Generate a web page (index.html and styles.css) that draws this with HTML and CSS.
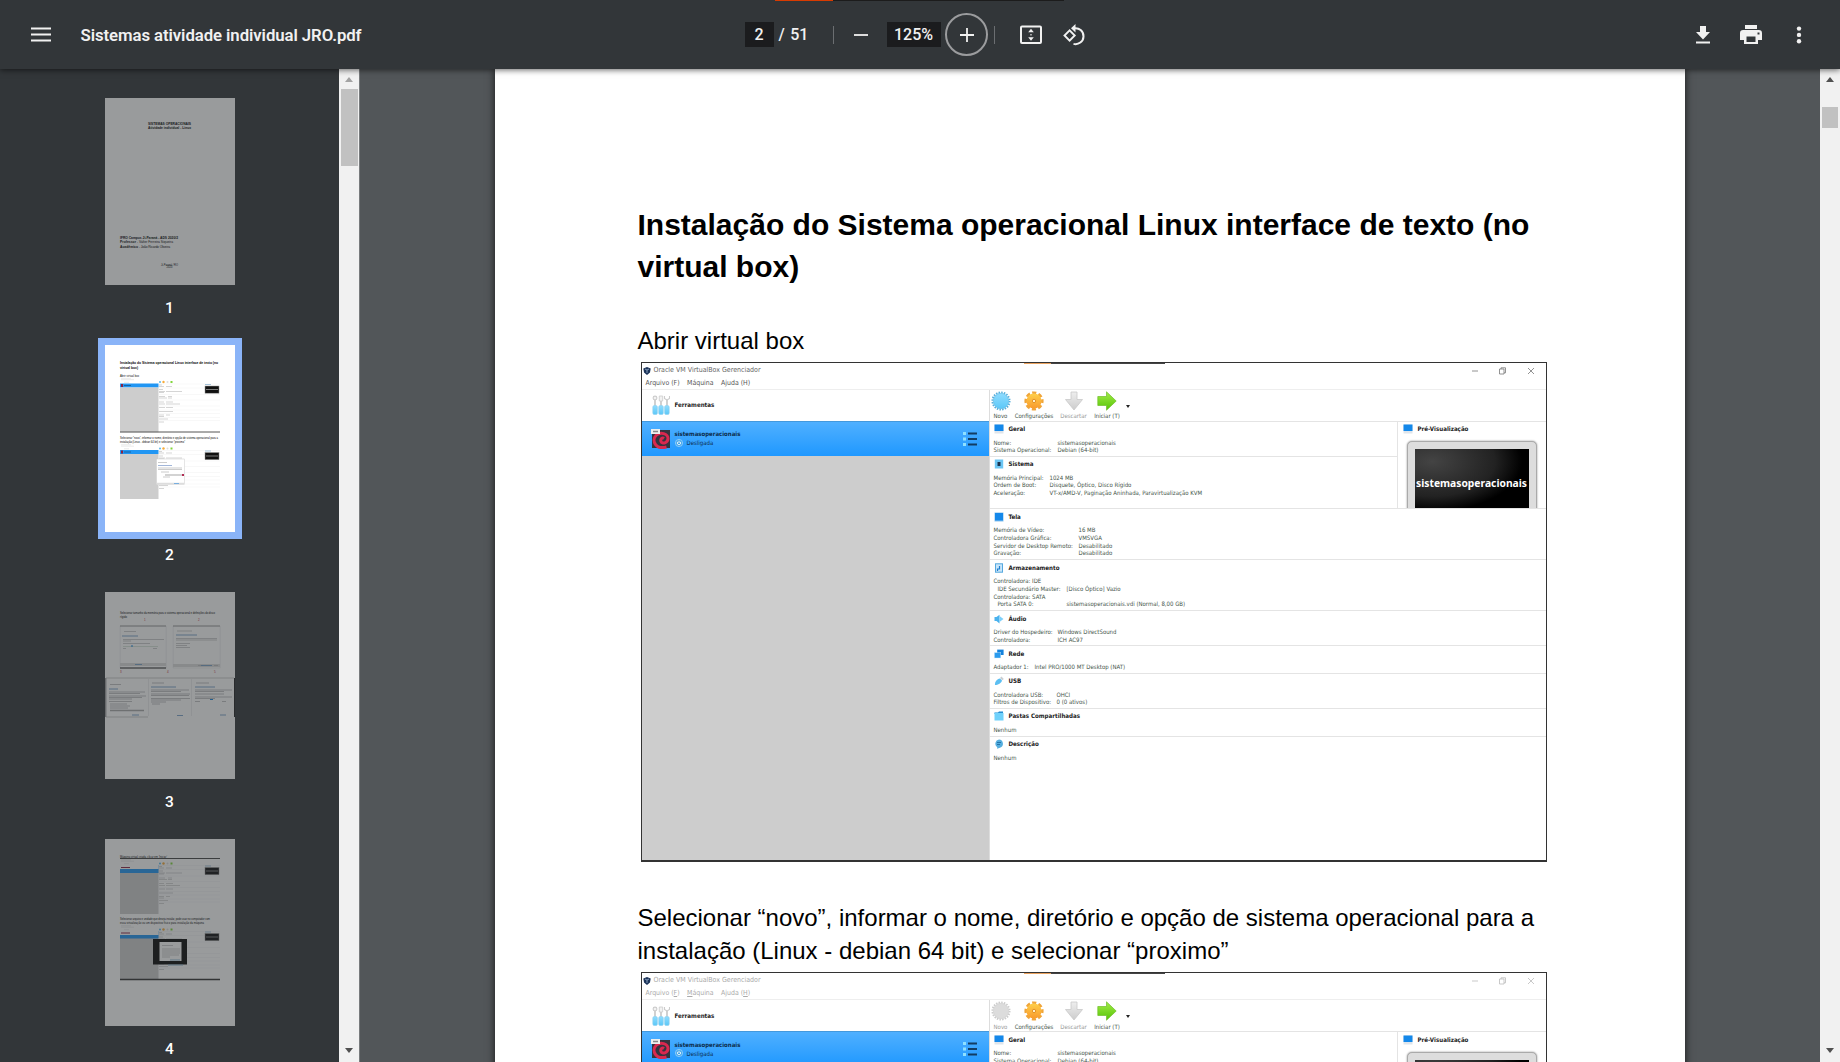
FILE: index.html
```html
<!DOCTYPE html>
<html lang="pt-BR">
<head>
<meta charset="utf-8">
<title>Sistemas atividade individual JRO.pdf</title>
<link rel="stylesheet" href="styles.css">
</head>
<body>
<svg class="defs" width="0" height="0" aria-hidden="true">
  <defs>
    <linearGradient id="gBlue" x1="0" y1="0" x2="0" y2="1"><stop offset="0" stop-color="#8fdcff"/><stop offset="1" stop-color="#5cc8f8"/></linearGradient>
    <linearGradient id="gOrange" x1="0" y1="0" x2="0" y2="1"><stop offset="0" stop-color="#ffd04a"/><stop offset="1" stop-color="#f99a2c"/></linearGradient>
    <linearGradient id="gGreen" x1="0" y1="0" x2="0" y2="1"><stop offset="0" stop-color="#a2ec48"/><stop offset="1" stop-color="#56c405"/></linearGradient>
    <linearGradient id="gGray" x1="0" y1="0" x2="0" y2="1"><stop offset="0" stop-color="#eee"/><stop offset="1" stop-color="#ccc"/></linearGradient>
    <symbol id="i-logo" viewBox="0 0 8 8"><path d="M.3 1.400 4 0l3.700 1.400-.7 4L4 8 1 5.400z" fill="#1b3358"/><path d="M2 2l2 1 2-1M4 3v3" stroke="#9fb6d4" stroke-width=".8" fill="none"/></symbol>
    <symbol id="i-tools" viewBox="0 0 18 20"><g stroke="#ccc" stroke-width="1.100" fill="#f2f2f2"><path d="M3 5v6M9 2v9M15 5v6" stroke-width="1.800"/><circle cx="3" cy="3" r="1.900"/><path d="M7.300 1h3.400v5H7.300z" stroke-width=".8"/><path d="M12.500 1v2.500L15 5l2.500-1.500V1" fill="none"/></g><g fill="url(#gBlue)" stroke="#8fd0ee" stroke-width=".6"><rect x=".8" y="10.500" width="4.600" height="9" rx="1.500"/><rect x="6.700" y="10.500" width="4.600" height="9" rx="1.500"/><rect x="12.600" y="10.500" width="4.600" height="9" rx="1.500"/></g></symbol>
    <symbol id="i-star" viewBox="0 0 20 20"><circle cx="10" cy="10" r="8.600" fill="none" stroke="#58aeda" stroke-width="1.900" stroke-dasharray="1.500 1.200"/><circle cx="10" cy="10" r="7.700" fill="url(#gBlue)" stroke="#5bb5e0" stroke-width=".6"/></symbol>
    <symbol id="i-star-off" viewBox="0 0 20 20"><circle cx="10" cy="10" r="8.600" fill="none" stroke="#ccc" stroke-width="1.900" stroke-dasharray="1.500 1.200"/><circle cx="10" cy="10" r="7.700" fill="#dcdcdc" stroke="#ccc" stroke-width=".6"/></symbol>
    <symbol id="i-gear" viewBox="0 0 20 20"><circle cx="10" cy="10" r="8" fill="none" stroke="#f0a53a" stroke-width="3.200" stroke-dasharray="4 2.283" stroke-dashoffset="2"/><circle cx="10" cy="10" r="7.600" fill="url(#gOrange)"/><circle cx="10" cy="10" r="1.700" fill="#fff0c8" stroke="#e08a1c" stroke-width=".9"/></symbol>
    <symbol id="i-down" viewBox="0 0 20 20"><path d="M7 1h6v7.500h5.500L10 19 1.500 8.500H7z" fill="url(#gGray)" stroke="#c9c9c9" stroke-width=".8"/></symbol>
    <symbol id="i-go" viewBox="0 0 20 20"><path d="M.8 5.500h8.700V.8l9.700 9.200-9.700 9.200v-4.700H.8z" fill="url(#gGreen)" stroke="#6fbf28" stroke-width=".7"/></symbol>
    <symbol id="i-debian" viewBox="0 0 20 20"><rect x="1" y="1" width="18" height="18" fill="#34343e"/><path d="M15.500 18C4 21 .5 11 5 6.500S17 5 17 9.500s-6 6-7 3 1.500-4 3-3" fill="none" stroke="#d9284f" stroke-width="3"/><rect x="0" y="0" width="9" height="5" fill="#eee"/><path d="M2 2.500h5" stroke="#888" stroke-width="1.500"/></symbol>
    <symbol id="i-power" viewBox="0 0 8 8"><circle cx="4" cy="4" r="3.600" fill="#43a5e8" stroke="#b9e2ff" stroke-width=".6"/><path d="M2.800 2.800a1.700 1.700 0 1 0 2.400 0M4 1.700V4" fill="none" stroke="#fff" stroke-width=".8"/></symbol>
    <symbol id="i-menu" viewBox="0 0 14 14"><g fill="#8fe0ff"><rect width="3" height="3"/><rect y="5.500" width="3" height="3"/><rect y="11" width="3" height="3"/></g><g fill="#123c63"><rect x="5" y=".5" width="9" height="2"/><rect x="5" y="6" width="9" height="2"/><rect x="5" y="11.500" width="9" height="2"/></g></symbol>
    <symbol id="i-screen" viewBox="0 0 10 10"><rect x=".5" y=".5" width="9" height="9" fill="#dfe5eb"/><rect x=".5" y=".5" width="9" height="6.500" fill="#1488ea"/></symbol>
    <symbol id="i-display" viewBox="0 0 10 10"><rect x=".5" y=".5" width="9" height="9" fill="#8cc4ee"/><rect x="1" y="1" width="8" height="7.500" fill="#1488ea"/></symbol>
    <symbol id="i-chip" viewBox="0 0 10 10"><rect x=".8" y=".5" width="8.400" height="9" fill="#6cc6f4"/><rect x="3.500" y="3" width="3" height="4" fill="#1b3550"/></symbol>
    <symbol id="i-disk" viewBox="0 0 10 10"><rect x="1.500" y=".8" width="7" height="8.400" fill="#c9e6fa" stroke="#56a8de"/><path d="M3.500 8V6h2V3" fill="none" stroke="#1d7fd0" stroke-width="1.200"/></symbol>
    <symbol id="i-audio" viewBox="0 0 10 10"><path d="M.5 3h2L5.500.8v8.600l-3-2.400h-2z" fill="#4ab2ee"/><path d="M5.500 2 9.500 5 5.500 8z" fill="#7fd0fa"/></symbol>
    <symbol id="i-net" viewBox="0 0 10 10"><rect x="3.200" y=".6" width="6.400" height="5.400" fill="#1482dc"/><rect x=".4" y="3.600" width="6.400" height="5.400" fill="#2b9bed" stroke="#cfe8fb" stroke-width=".4"/></symbol>
    <symbol id="i-usb" viewBox="0 0 10 10"><path d="M1 9C.5 6 3 3 6 2.500l2 2C7.500 7 4 9 1 9z" fill="#5cbff2"/><path d="m6 2 1.500-1.500L9.800 3 8.300 4.300z" fill="#c9ced2"/></symbol>
    <symbol id="i-folder" viewBox="0 0 10 10"><path d="M.5 1.500H4l1-1h4V3H.5z" fill="#1d86cf"/><rect x=".5" y="1.900" width="9" height="7.600" fill="#6fd1fb"/></symbol>
    <symbol id="i-note" viewBox="0 0 10 10"><path d="M5 .5a4.200 4.200 0 0 1 1 8.200L3 9.800l.3-1.600A4.200 4.200 0 0 1 5 .5z" fill="#55aede"/><path d="M3 3.500h4M3 5.500h3" stroke="#1b66a0" stroke-width=".8"/></symbol>
    <!-- miniature of the manager window used on page thumbnails -->
    <symbol id="mini" viewBox="0 0 100 55">
      <path d="M1 .8h10M1 2.200h13M4 4.800h5" stroke="#ccc" stroke-width=".4"/>
      <rect y="6" width="38.500" height="4" fill="#2196f3"/><rect y="10" width="38.500" height="45" fill="#cdcdcd"/>
      <rect x="1" y="6.500" width="2" height="3" fill="#8c2344"/><path d="M4 8h7" stroke="#174d7c" stroke-width=".7"/>
      <circle cx="40" cy="4.500" r="1" fill="#5ab9ec"/><circle cx="43.500" cy="4.500" r="1.200" fill="#f7ab39"/><circle cx="47.500" cy="4.500" r="1" fill="#ddd"/><path d="M50.500 3.500h2v2h-2z" fill="#80d63a"/>
      <path d="M39 6.500h61M39 10.500h46M39 17h61M39 22.500h61M39 28.500h61M39 32.500h61M39 36h61M39 40h61M39 43h61" stroke="#eee" stroke-width=".4"/>
      <g stroke="#aaa" stroke-width=".5"><path d="M39 7.500h3M39 9h5M46 9h6M39 12h4M39 14h6M46 14h16M39 15h5M39 19h6M48 19h4M39 20.500h8M48 20.500h4M39 24.500h5M46 24.500h7M39 26.500h6M46 26.500h14M39 30h6M46 30h7M39 34h14M39 37.500h5M46 37.500h4M39 39h5M39 41.500h9M39 44.500h5"/></g>
      <rect x="85" y="8.500" width="14" height="7.200" fill="#101010" stroke="#999" stroke-width=".5"/><path d="M86 12h12" stroke="#aaa" stroke-width=".7"/><path d="M85 7h6" stroke="#6a9bc0" stroke-width=".6"/>
    </symbol>
  </defs>
</svg>

<div class="viewer">
  <header class="toolbar">
    <div class="title-area">
      <svg class="burger" viewBox="0 0 20 16"><path d="M0 1.500h20M0 7.500h20M0 13.500h20" stroke="#f1f1f1" stroke-width="2.200"/></svg>
      <h1 class="file-name">Sistemas atividade individual JRO.pdf</h1>
    </div>
    <div class="controls">
      <span class="field page-field">2</span><span class="page-total">/ 51</span>
      <i class="sep sep-a"></i>
      <svg class="minus" viewBox="0 0 14 14"><path d="M0 7h14" stroke="#ddd" stroke-width="2"/></svg>
      <span class="field zoom-field">125%</span>
      <span class="plus-ring"><svg viewBox="0 0 14 14"><path d="M0 7h14M7 0v14" stroke="#f1f1f1" stroke-width="1.800"/></svg></span>
      <i class="sep"></i>
      <svg class="fit" viewBox="0 0 22 20"><rect x="1" y="1.500" width="20" height="16.500" rx="1" fill="none" stroke="#f1f1f1" stroke-width="2"/><path d="m11 3.800 2.800 3.400H8.200zM11 15.700l2.800-3.400H8.200zM10.400 9h1.200v1.500h-1.200z" fill="#f1f1f1"/></svg>
      <svg class="rotate" viewBox="0 0 22 22"><path d="M6.600 6.400 1.500 11.500l5.100 5.100 5.100-5.100z" fill="none" stroke="#f1f1f1" stroke-width="1.900"/><path d="M11 4.300a8 8 0 1 1-.5 15.600" fill="none" stroke="#f1f1f1" stroke-width="2"/><path d="M12.500 0v8.400L8 4.300z" fill="#f1f1f1"/></svg>
    </div>
    <div class="actions">
      <svg width="16" height="20" viewBox="0 0 16 20"><path d="M5 1h6v6h4l-7 7.500L1 7h4zM1 16.500h14v2H1z" fill="#f1f1f1"/></svg>
      <svg width="22" height="20" viewBox="0 0 22 20"><path d="M5 0h12v4H5zM3.500 5h15A3.300 3.300 0 0 1 22 8.300V15h-4v4H4v-4H0V8.300A3.300 3.300 0 0 1 3.500 5zM6.500 11.500V17h9v-5.500zM17.500 7.500v2h2v-2z" fill="#f1f1f1" fill-rule="evenodd"/></svg>
      <svg width="6" height="18" viewBox="0 0 6 18"><g fill="#f1f1f1"><circle cx="3" cy="2.600" r="2.200"/><circle cx="3" cy="8.900" r="2.200"/><circle cx="3" cy="15.200" r="2.200"/></g></svg>
    </div>
    <i class="top-strip"></i>
  </header>

  <div class="body">
    <aside class="thumbs">
      <figure class="thumb">
        <svg class="paper" viewBox="0 0 130 187">
          <rect width="130" height="187" fill="#fff"/>
          <g font-size="3.300"><g font-weight="bold"><text x="43" y="26.800" textLength="43">SISTEMAS OPERACIONAIS</text><text x="43" y="30.800" textLength="43">Atividade individual - Linux</text><text x="15" y="141" textLength="58">IFRO Campus Ji-Paraná - ADS 2020/2</text><text x="15" y="145" textLength="16">Professor</text><text x="15" y="150" textLength="18">Acadêmico</text></g>
          <text x="32" y="145" textLength="36">- Valter Ferreira Siqueira</text><text x="34" y="150" textLength="31">- João Ricardo Oliveira</text></g>
          <g font-size="2.600"><text x="56" y="167.500" textLength="17">Ji-Paraná / RO</text><text x="61.500" y="170.300" textLength="6">2020</text></g>
        </svg>
        <figcaption>1</figcaption>
      </figure>
      <figure class="thumb selected">
        <svg class="paper" viewBox="0 0 130 187">
          <rect width="130" height="187" fill="#fff"/>
          <g font-size="3.300" font-weight="bold"><text x="15" y="19" textLength="98">Instalação do Sistema operacional Linux interface de texto (no</text><text x="15" y="24" textLength="18">virtual box)</text></g>
          <g font-size="2.600"><text x="15" y="31.800" textLength="19">Abrir virtual box</text><text x="15" y="93.500" textLength="98">Selecionar “novo”, informar o nome, diretório e opção de sistema operacional para a</text><text x="15" y="97.500" textLength="65">instalação (Linux - debian 64 bit) e selecionar “proximo”</text></g>
          <use href="#mini" x="15" y="32.500" width="100" height="55"/><path d="M15 87h100" stroke="#555"/>
          <use href="#mini" x="15" y="99" width="100" height="55"/>
          <rect x="51.500" y="114" width="28" height="25.500" fill="#fff" stroke="#ccc" stroke-width=".5"/><path d="M53 117.500h9M53 123h24M53 124.500h24M56 127h8M58 132h7" stroke="#aaa" stroke-width=".6"/><path d="M53 120.500h14" stroke="#7a97c9" stroke-width=".7"/><path d="M60 130h17" stroke="#c5c5c5" stroke-width="1.500"/><path d="M77 129h2v2h-2z" fill="#b22b52"/><path d="M52 138.500h27" stroke="#ddd" stroke-width="1.500"/><path d="M69 138.500h5" stroke="#77aedf"/>
        </svg>
        <figcaption>2</figcaption>
      </figure>
      <figure class="thumb">
        <svg class="paper" viewBox="0 0 130 187">
          <rect width="130" height="187" fill="#fff"/>
          <g font-size="2.700"><text x="15" y="21.500" textLength="95">Selecionar tamanho da memória para o sistema operacional e definições do disco</text><text x="15" y="25.500" textLength="7">rígido</text></g>
          <g fill="#c33" font-size="3"><text x="39" y="28.500">1</text><text x="93" y="28.500">2</text><text x="15" y="80.500">3</text><text x="62" y="80.500">4</text><text x="109" y="80.500">5</text></g>
          <g fill="none" stroke="#ddd" stroke-width=".5"><path d="M15.200 34v42h46V34M68.200 34v42h47V34"/></g>
          <path d="M15 34h46M68 34h47" stroke="#777" stroke-width=".8"/><path d="M15 76h46" stroke="#222"/><path d="M15 72.500h46M68 73.500h47" stroke="#ddd" stroke-width="3"/>
          <g stroke="#aaa" stroke-width=".6"><path d="M19 39.500h12M72 39h15M18 47.500h41M18 49h8M18 51.500h27M18 56.500h3M48 56.500h4M71 46.500h41M71 48h41M71 51.500h14M71 53.500h11M71 55.500h14M93 73.500h5M109 73.500h4"/></g>
          <path d="M17 44h16M71 43h21M96 73.500h11M30 72.500h7" stroke="#6f9bc4" stroke-width=".9"/><path d="M18 54.500h35" stroke="#b3ccb5" stroke-width=".5"/><path d="M26 54h2" stroke="#1686e0" stroke-width="1.200"/>
          <path d="M.8 86v39" stroke="#777"/><path d="M129.500 86v39" stroke="#222"/><path d="M1 86h128M1 125h42" stroke="#aaa" stroke-width=".6"/><path d="M43.500 87v37M86.500 87v37" stroke="#ddd" stroke-width=".5"/>
          <g stroke="#999" stroke-width=".6"><path d="M5 92.500h11M47 91h12M91 91h13M4 100h36M4 101.500h31M4 104h37M4 105.500h33M4 107h23M4 109.500h23M5 112h17M5 114h20M5 116h18M46 98h38M46 99.500h30M46 102h39M46 103.500h38M46 106.500h39M46 108h30M46 110h15M47 112h8M90 98h37M90 99.500h29M90 102h29M90 105h37M90 106.500h20M90 109.500h5M117 109.500h4"/></g>
          <path d="M5 118.500h34" stroke="#aaa" stroke-width="1.500"/><path d="M4 97h9M46 95h25M90 95h20M27 123h7M72 123.500h6M115 123h6" stroke="#6f9bc4" stroke-width=".9"/><path d="M105 107.500h3" stroke="#1686e0"/>
        </svg>
        <figcaption>3</figcaption>
      </figure>
      <figure class="thumb">
        <svg class="paper" viewBox="0 0 130 187">
          <rect width="130" height="187" fill="#fff"/>
          <g font-size="2.600"><text x="15" y="18.500" textLength="47">Máquina virtual criada, clicar em ‘Iniciar’</text><text x="15" y="80.500" textLength="90">Selecionar arquivo e unidade que deseja instalar, pode usar no computador com</text><text x="15" y="84.500" textLength="84">essa virtualização ou um dispositivo físico para instalação da máquina</text></g>
          <path d="M15 19.500h100" stroke="#444"/>
          <use href="#mini" x="15" y="20" width="100" height="55"/><rect x="15" y="25.500" width="38.500" height="4.500" fill="#fff"/><path d="M16 28.500h9" stroke="#8c2344"/><rect x="15" y="30" width="38.500" height="4" fill="#2196f3"/>
          <use href="#mini" x="15" y="86" width="100" height="55"/><rect x="15" y="91.500" width="38.500" height="4.500" fill="#fff"/><path d="M16 94h9" stroke="#8c2344"/><rect x="15" y="96" width="38.500" height="3.500" fill="#2196f3"/>
          <path d="M15 140.500h100" stroke="#333" stroke-width="1.500"/>
          <rect x="48" y="100" width="34" height="25.500" fill="#090909"/><rect x="54.500" y="103" width="22" height="19" fill="#fff"/><path d="M57 106.500h11M57 110h18M57 112h18M57 114h18M57 116h17M57 118h8" stroke="#aaa" stroke-width=".6"/><path d="M63 126h15M65 121h10" stroke="#6fa3c4" stroke-width=".8"/>
        </svg>
        <figcaption>4</figcaption>
      </figure>
    </aside>
    <div class="scrollbar muted"><i class="up"></i><i class="grip"></i><i class="down"></i></div>

    <main class="canvas">
      <article class="page">
        <h2 class="doc-title"><span>Instalação do Sistema operacional Linux interface de texto (no</span><br>virtual box)</h2>
        <p class="doc-text first">Abrir virtual box</p>

        <section class="vbox">
          <div class="vb-title"><svg class="logo"><use href="#i-logo"/></svg><span class="vb-name">Oracle VM VirtualBox Gerenciador</span><i class="strip"></i>
            <svg class="winbtns" viewBox="0 0 64 8"><path d="M0 4h6M27.500 2h4.500v5h-4.500zM29 2V.8h4.500v5H32M56 1l6 6M62 1l-6 6" fill="none" stroke="#777" stroke-width=".8"/></svg></div>
          <div class="vb-menu"><span>Arquivo (F)</span><span>Máquina</span><span>Ajuda (H)</span></div>
          <div class="vb-main">
            <div class="vb-left">
              <div class="vb-tools"><svg><use href="#i-tools"/></svg><b>Ferramentas</b></div>
              <div class="vb-machine"><svg class="deb"><use href="#i-debian"/></svg><div class="m-info"><b>sistemasoperacionais</b><span><svg><use href="#i-power"/></svg>Desligada</span></div><svg class="m-menu"><use href="#i-menu"/></svg></div>
            </div>
            <div class="vb-right">
              <div class="vb-bar">
                <div class="tb b1"><svg><use href="#i-star"/></svg><span>Novo</span></div>
                <div class="tb b2"><svg><use href="#i-gear"/></svg><span>Configurações</span></div>
                <div class="tb b3 off"><svg><use href="#i-down"/></svg><span>Descartar</span></div>
                <div class="tb b4"><svg><use href="#i-go"/></svg><span>Iniciar (T)</span></div>
                <i class="caret"></i>
              </div>
              <div class="vb-top">
                <div class="vb-top-left">
                  <div class="sec s-geral"><h3><svg><use href="#i-screen"/></svg>Geral</h3><dl><dt>Nome:</dt><dd>sistemasoperacionais</dd><dt>Sistema Operacional:</dt><dd>Debian (64-bit)</dd></dl></div>
                  <div class="sec s-sistema"><h3><svg><use href="#i-chip"/></svg>Sistema</h3><dl><dt>Memória Principal:</dt><dd>1024 MB</dd><dt>Ordem de Boot:</dt><dd>Disquete, Óptico, Disco Rígido</dd><dt>Aceleração:</dt><dd>VT-x/AMD-V, Paginação Aninhada, Paravirtualização KVM</dd></dl></div>
                </div>
                <div class="vb-preview"><h3><svg><use href="#i-screen"/></svg>Pré-Visualização</h3><div class="bezel"><div class="screen">sistemasoperacionais</div></div></div>
              </div>
              <div class="sec s-tela"><h3><svg><use href="#i-display"/></svg>Tela</h3><dl><dt>Memória de Vídeo:</dt><dd>16 MB</dd><dt>Controladora Gráfica:</dt><dd>VMSVGA</dd><dt>Servidor de Desktop Remoto:</dt><dd>Desabilitado</dd><dt>Gravação:</dt><dd>Desabilitado</dd></dl></div>
              <div class="sec s-arm"><h3><svg><use href="#i-disk"/></svg>Armazenamento</h3><dl><dt>Controladora: IDE</dt><dd></dd><dt class="in">IDE Secundário Master:</dt><dd>[Disco Óptico] Vazio</dd><dt>Controladora: SATA</dt><dd></dd><dt class="in">Porta SATA 0:</dt><dd>sistemasoperacionais.vdi (Normal, 8,00 GB)</dd></dl></div>
              <div class="sec s-audio"><h3><svg><use href="#i-audio"/></svg>Áudio</h3><dl><dt>Driver do Hospedeiro:</dt><dd>Windows DirectSound</dd><dt>Controladora:</dt><dd>ICH AC97</dd></dl></div>
              <div class="sec s-rede"><h3><svg><use href="#i-net"/></svg>Rede</h3><dl><dt>Adaptador 1:</dt><dd>Intel PRO/1000 MT Desktop (NAT)</dd></dl></div>
              <div class="sec s-usb"><h3><svg><use href="#i-usb"/></svg>USB</h3><dl><dt>Controladora USB:</dt><dd>OHCI</dd><dt>Filtros de Dispositivo:</dt><dd>0 (0 ativos)</dd></dl></div>
              <div class="sec s-pastas"><h3><svg><use href="#i-folder"/></svg>Pastas Compartilhadas</h3><dl><dt>Nenhum</dt></dl></div>
              <div class="sec s-desc"><h3><svg><use href="#i-note"/></svg>Descrição</h3><dl><dt>Nenhum</dt></dl></div>
            </div>
          </div>
        </section>

        <p class="doc-text second"><span>Selecionar “novo”, informar o nome, diretório e opção de sistema operacional para a</span><br>instalação (Linux - debian 64 bit) e selecionar “proximo”</p>

        <section class="vbox inactive">
          <div class="vb-title"><svg class="logo"><use href="#i-logo"/></svg><span class="vb-name">Oracle VM VirtualBox Gerenciador</span><i class="strip"></i>
            <svg class="winbtns" viewBox="0 0 64 8"><path d="M0 4h6M27.500 2h4.500v5h-4.500zM29 2V.8h4.500v5H32M56 1l6 6M62 1l-6 6" fill="none" stroke="#bbb" stroke-width=".8"/></svg></div>
          <div class="vb-menu"><span>Arquivo (<u>F</u>)</span><span><u>M</u>áquina</span><span>Ajuda (<u>H</u>)</span></div>
          <div class="vb-main">
            <div class="vb-left">
              <div class="vb-tools"><svg><use href="#i-tools"/></svg><b>Ferramentas</b></div>
              <div class="vb-machine"><svg class="deb"><use href="#i-debian"/></svg><div class="m-info"><b>sistemasoperacionais</b><span><svg><use href="#i-power"/></svg>Desligada</span></div><svg class="m-menu"><use href="#i-menu"/></svg></div>
            </div>
            <div class="vb-right">
              <div class="vb-bar">
                <div class="tb b1 off"><svg><use href="#i-star-off"/></svg><span>Novo</span></div>
                <div class="tb b2"><svg><use href="#i-gear"/></svg><span>Configurações</span></div>
                <div class="tb b3 off"><svg><use href="#i-down"/></svg><span>Descartar</span></div>
                <div class="tb b4"><svg><use href="#i-go"/></svg><span>Iniciar (T)</span></div>
                <i class="caret"></i>
              </div>
              <div class="vb-top">
                <div class="vb-top-left">
                  <div class="sec s-geral"><h3><svg><use href="#i-screen"/></svg>Geral</h3><dl><dt>Nome:</dt><dd>sistemasoperacionais</dd><dt>Sistema Operacional:</dt><dd>Debian (64-bit)</dd></dl></div>
                </div>
                <div class="vb-preview"><h3><svg><use href="#i-screen"/></svg>Pré-Visualização</h3><div class="bezel"><div class="screen"></div></div></div>
              </div>
            </div>
          </div>
        </section>
      </article>
    </main>
    <div class="scrollbar main-scroll"><i class="up"></i><i class="grip"></i><i class="down"></i></div>
  </div>
</div>
</body>
</html>
```
FILE: styles.css
```css
* { box-sizing: border-box; }
body { margin: 0; background: #525659; overflow: hidden; }
.defs { position: absolute; }
svg { display: block; flex: none; }
h1, h2, h3, p, dl, dd, figure { margin: 0; }

.viewer { display: flex; flex-direction: column; width: 1840px; height: 1062px; overflow: hidden; font-family: Roboto, "Liberation Sans", sans-serif; }

/* toolbar */
.toolbar { position: relative; z-index: 2; flex: none; display: flex; align-items: center; height: 69px; background: #323639; color: #f1f1f1; box-shadow: 0 1px 6px rgba(0, 0, 0, .6); }
.title-area { display: flex; align-items: center; width: 744.500px; padding-left: 30.500px; gap: 30px; }
.burger { width: 20px; height: 16px; }
.file-name { font-size: 16.750px; font-weight: 600; letter-spacing: -.07px; line-height: 20px; white-space: nowrap; }
.controls { display: flex; align-items: center; font-size: 16px; font-weight: 500; }
.field { display: flex; align-items: center; justify-content: center; height: 25px; background: #1b1c1e; }
.page-field { width: 29px; }
.page-total { width: 59px; padding-left: 5px; word-spacing: 1.500px; white-space: nowrap; }
.sep { width: 1px; height: 18px; background: #6b6e71; }
.minus { width: 14px; height: 14px; margin: 0 19px 0 20px; }
.zoom-field { width: 54px; }
.plus-ring { display: flex; align-items: center; justify-content: center; width: 43px; height: 43px; margin: 0 6px 0 4.500px; border: 2px solid #9b9c9e; border-radius: 50%; }
.plus-ring svg { width: 14px; height: 14px; }
.fit { width: 22px; height: 20px; margin: 0 20.500px 0 25px; }
.rotate { width: 22px; height: 22px; }
.actions { display: flex; align-items: center; gap: 29px; margin-left: auto; padding-right: 38px; }
.actions svg:nth-child(2) { margin-right: 5px; }
.top-strip { position: absolute; top: 0; left: 775px; width: 289px; height: 1px; background: linear-gradient(90deg, #d83b01 58px, #1c1c1c 58px); }

.body { flex: 1; display: flex; min-height: 0; }

/* thumbnails */
.thumbs { width: 339px; background: #323639; padding-top: 29px; overflow: hidden; }
.thumb { height: 247px; padding-left: 105px; }
.paper { width: 130px; height: 187px; opacity: .5; font-family: "Liberation Sans", sans-serif; }
.selected .paper { opacity: 1; outline: 7px solid #8ab4f8; }
.thumb figcaption { width: 129px; margin-top: 12.500px; color: #fff; font-size: 15.500px; font-weight: 500; line-height: 20px; text-align: center; }

/* scrollbars */
.scrollbar { display: flex; flex-direction: column; align-items: center; width: 20px; background: #f1f1f1; flex: none; }
.muted { width: 21px; border-right: 1px solid #787b7d; }
.up, .down { border: 4.500px solid transparent; }
.up { margin-top: 4px; border-bottom: 5px solid #505050; }
.muted .up { border-bottom-color: #a3a3a3; }
.down { margin: auto 0 5px; border-top: 5px solid #505050; }
.grip { width: 17px; height: 77px; margin-top: 7px; background: #c1c1c1; }
.main-scroll .grip { height: 21px; width: 16px; margin-top: 25px; }

/* document page */
.canvas { flex: 1; min-width: 0; padding-left: 134.500px; overflow: hidden; }
.page { width: 1190px; height: 1100px; padding: 134.500px 0 0 143px; background: #fff; color: #000; box-shadow: 0 0 8px rgba(0, 0, 0, .75); font-family: "Liberation Sans", Arial, sans-serif; white-space: nowrap; }
.doc-title { font-size: 30px; line-height: 42.500px; }
.doc-text { font-size: 24px; line-height: 33px; }
.first { margin: 35px 0 5px; }
.second { margin: 39.500px 0 5px; }

/* embedded manager window */
.vbox { position: relative; display: flex; flex-direction: column; width: 906px; height: 500px; margin-left: 3px; border: 1px solid #333; border-top-width: 1.500px; border-bottom-width: 2px; font-family: "DejaVu Sans Condensed", "Noto Sans", sans-serif; font-size: 6px; line-height: 7.750px; color: #45554a; }
.vb-title { display: flex; align-items: center; height: 14px; padding: 2px 10px 0 1px; font-size: 7px; color: #666; }
.logo { width: 8px; height: 8px; margin-right: 3px; }
.strip { position: absolute; top: 0; left: 382px; width: 141px; height: 1px; background: linear-gradient(90deg, #e9a25f 27px, #444 27px); }
.winbtns { width: 64px; height: 8px; margin-left: auto; }
.vb-menu { display: flex; gap: 7.500px; height: 13px; padding: 3px 0 0 4px; font-size: 6.900px; color: #555; border-bottom: 1px solid #eee; }
.inactive .vb-title, .inactive .vb-menu { color: #aaa; }
.vb-main { flex: 1; display: flex; min-height: 0; }
.vb-left { width: 347px; background: #cdcdcd; }
.vb-tools { display: flex; align-items: center; gap: 5px; height: 31px; padding-left: 10px; background: #fff; color: #222; font-size: 6.200px; }
.vb-tools svg { width: 18px; height: 20px; }
.vb-machine { display: flex; align-items: center; height: 35px; padding: 0 12px 0 9px; background: linear-gradient(#50b0ff, #1f98ff); color: #0c2c4c; font-size: 6px; border-top: 1px solid #4499dd; }
.deb { width: 20px; height: 20px; margin-right: 4px; }
.m-info span { display: flex; align-items: center; gap: 4px; margin-top: 1px; font-size: 6px; }
.m-info svg { width: 8px; height: 8px; }
.m-menu { width: 14px; height: 14px; margin-left: auto; }
.vb-right { flex: 1; border-left: 1px solid #ddd; background: #fff; }
.vb-bar { display: flex; align-items: flex-start; height: 31px; padding-top: 1px; }
.tb { display: flex; flex-direction: column; align-items: center; font-size: 6px; }
.tb svg { width: 20px; height: 20px; margin-bottom: 1.500px; }
.b1 { width: 22px; }
.b2 { width: 45px; }
.b3 { width: 34px; }
.b4 { width: 33px; }
.off { color: #999; }
.caret { margin: 14px 0 0 2px; border: 2px solid transparent; border-top: 3px solid #222; }
.vb-top { display: flex; }
.vb-top-left { flex: 1; }
.sec { border-top: 1px solid #e4e4e4; padding: 1.500px 0 0 4px; overflow: hidden; }
.vbox h3 { display: flex; align-items: center; gap: 5px; height: 12px; font-size: 6.150px; line-height: 10px; color: #222; }
.vbox h3 svg { width: 10px; height: 10px; }
.sec dl { display: grid; grid-template-columns: var(--col, 64px) 1fr; grid-auto-rows: 7.750px; margin-top: 3.500px; }
.in { padding-left: 4px; }
.s-geral { height: 35px; }
.s-sistema { height: 52.500px; --col: 56px; }
.s-tela { height: 51px; --col: 85px; }
.s-arm { height: 51px; --col: 73px; }
.s-audio { height: 35px; --col: 64px; }
.s-rede { height: 27.500px; --col: 41px; }
.s-usb { height: 35px; --col: 63px; }
.s-pastas, .s-desc { height: 28px; }
.vb-preview { width: 149px; height: 87.500px; padding: 1.500px 0 0 5px; border: solid #e4e4e4; border-width: 1px 0 0 1px; overflow: hidden; }
.bezel { width: 130px; height: 90px; margin: 6px 0 0 4px; padding: 7px 7px 0; border: 1px solid #aaa; border-radius: 5px; background: #ddd; box-shadow: 0 0 2px #888; }
.screen { height: 83px; padding-top: 28.500px; background: radial-gradient(ellipse 90px 50px at 15% 15%, #444, #222 70%, #000 100%); color: #fff; font: bold 10.300px/10px "Noto Sans", sans-serif; text-align: center; display: flex; justify-content: center; }
```
